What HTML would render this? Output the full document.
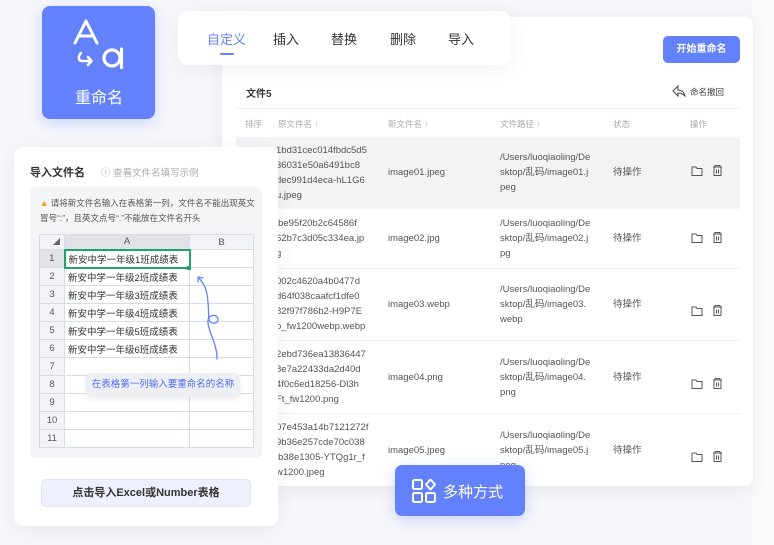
<html><head><style>
*{margin:0;padding:0;box-sizing:border-box}
body{width:774px;height:545px;overflow:hidden;background:#f6f7fa;font-family:"Liberation Sans","Noto Sans CJK SC",sans-serif;position:relative;color:#333}
.abs{position:absolute}
.card{background:#fff;border-radius:10px;box-shadow:0 4px 20px rgba(0,0,30,.06)}
.t{font-size:9.5px;color:#555;line-height:15px}
td{border:1px solid #d6dce8;font-size:9.5px;height:18px;color:#333;padding-left:3px}
td.n{background:#f3f4f7;text-align:center;color:#555;padding:0}
</style></head><body>
<div class="abs" style="left:753px;top:0;width:21px;height:545px;background:#f9fafc"></div>
<div class="abs card" style="left:222px;top:17px;width:531px;height:469px;border-radius:8px"></div>
<div class="abs" style="left:663px;top:36px;width:77px;height:27px;background:#6381fb;border-radius:5px;color:#fff;font-size:10px;font-weight:bold;text-align:center;line-height:27px">开始重命名</div>
<div class="abs" style="left:246px;top:85px;font-size:10px;font-weight:bold;color:#333">文件5</div>
<svg class="abs" style="left:672px;top:85px" width="14" height="12" viewBox="0 0 14 12"><path d="M6 1L1 6l5 5V8c3 0 5 1 7 3-1-4-3-6-7-6V1z" fill="none" stroke="#444" stroke-width="1"/></svg>
<div class="abs" style="left:690px;top:86px;font-size:8.5px;color:#444">命名撤回</div>
<div class="abs" style="left:236px;top:108px;width:504px;border-top:1px solid #eee"></div>
<div class="abs" style="top:118px;left:245px;font-size:8.5px;color:#aaa">排序</div>
<div class="abs" style="top:118px;left:278px;font-size:8.5px;color:#aaa">原文件名 ↑</div>
<div class="abs" style="top:118px;left:388px;font-size:8.5px;color:#aaa">新文件名 ↑</div>
<div class="abs" style="top:118px;left:500px;font-size:8.5px;color:#aaa">文件路径 ↑</div>
<div class="abs" style="top:118px;left:613px;font-size:8.5px;color:#aaa">状态</div>
<div class="abs" style="top:118px;left:690px;font-size:8.5px;color:#aaa">操作</div>
<div class="abs" style="left:236px;top:137px;width:504px;height:72px;background:#f3f3f5"></div>
<div class="abs" style="left:236px;top:268px;width:504px;border-top:1px solid #eee"></div>
<div class="abs" style="left:236px;top:340px;width:504px;border-top:1px solid #eee"></div>
<div class="abs" style="left:236px;top:413px;width:504px;border-top:1px solid #eee"></div>

<div class="abs t" style="left:276px;top:143px">1bd31cec014fbdc5d5<br>36031e50a6491bc8<br>dec991d4eca-hL1G6<br>u.jpeg</div>
<div class="abs t" style="left:388px;top:165px">image01.jpeg</div>
<div class="abs t" style="left:500px;top:150px">/Users/luoqiaoling/De<br>sktop/乱码/image01.j<br>peg</div>
<div class="abs t" style="left:613px;top:165px">待操作</div>

<div class="abs t" style="left:276px;top:216px">lbe95f20b2c64586f<br>62b7c3d05c334ea.jp<br>g</div>
<div class="abs t" style="left:388px;top:231px">image02.jpg</div>
<div class="abs t" style="left:500px;top:216px">/Users/luoqiaoling/De<br>sktop/乱码/image02.j<br>pg</div>
<div class="abs t" style="left:613px;top:231px">待操作</div>

<div class="abs t" style="left:276px;top:274px">002c4620a4b0477d<br>d64f038caafcf1dfe0<br>82f97f786b2-H9P7E<br>o_fw1200webp.webp</div>
<div class="abs t" style="left:388px;top:297px">image03.webp</div>
<div class="abs t" style="left:500px;top:282px">/Users/luoqiaoling/De<br>sktop/乱码/image03.<br>webp</div>
<div class="abs t" style="left:613px;top:297px">待操作</div>

<div class="abs t" style="left:276px;top:347px">2ebd736ea13836447<br>8e7a22433da2d40d<br>4f0c6ed18256-Dl3h<br>Ft_fw1200.png</div>
<div class="abs t" style="left:388px;top:370px">image04.png</div>
<div class="abs t" style="left:500px;top:355px">/Users/luoqiaoling/De<br>sktop/乱码/image04.<br>png</div>
<div class="abs t" style="left:613px;top:370px">待操作</div>

<div class="abs t" style="left:276px;top:420px">07e453a14b7121272f<br>9b36e257cde70c038<br>lb38e1305-YTQg1r_f<br>w1200.jpeg</div>
<div class="abs t" style="left:388px;top:443px">image05.jpeg</div>
<div class="abs t" style="left:500px;top:428px">/Users/luoqiaoling/De<br>sktop/乱码/image05.j<br>peg</div>
<div class="abs t" style="left:613px;top:443px">待操作</div>

<svg class="abs" style="left:690px;top:164px" width="36" height="300">
<defs><g id="ic"><path d="M2 3h4l1 1.5h5v7H2z" fill="none" stroke="#555" stroke-width="1"/><path d="M23 3h9M25 3v-1.5h5V3M24 3.5v8h7v-8M26.5 5.5v4M28.5 5.5v4" fill="none" stroke="#555" stroke-width="1"/></g></defs>
<use href="#ic"/><use href="#ic" y="67"/><use href="#ic" y="140"/><use href="#ic" y="213"/><use href="#ic" y="286"/></svg>

<div class="abs card" style="left:178px;top:11px;width:333px;height:54px;border-radius:10px"></div>
<div class="abs" style="left:207px;top:29px;font-size:13px;color:#6381fb">自定义</div>
<div class="abs" style="left:220px;top:53px;width:14px;height:2px;background:#6381fb;border-radius:1px"></div>
<div class="abs" style="left:273px;top:29px;font-size:13px;color:#333">插入</div>
<div class="abs" style="left:331px;top:29px;font-size:13px;color:#333">替换</div>
<div class="abs" style="left:390px;top:29px;font-size:13px;color:#333">删除</div>
<div class="abs" style="left:448px;top:29px;font-size:13px;color:#333">导入</div>

<div class="abs" style="left:42px;top:6px;width:113px;height:113px;background:#6381fb;border-radius:8px;box-shadow:0 4px 14px rgba(99,129,251,.3)"></div>
<svg class="abs" style="left:70px;top:18px" width="60" height="55" viewBox="0 0 60 55"><path d="M5 25L16 3l11 22M8.5 18h15" fill="none" stroke="#fff" stroke-width="3" stroke-linecap="round" stroke-linejoin="round"/><path d="M11 35c-3 3-3 8 1 8h9M18 39l3.5 4-3.5 4" fill="none" stroke="#fff" stroke-width="2.5" stroke-linecap="round" stroke-linejoin="round"/><circle cx="42" cy="40" r="8" fill="none" stroke="#fff" stroke-width="3.2"/><path d="M51.5 31v18.5" stroke="#fff" stroke-width="3.2" stroke-linecap="round"/></svg>
<div class="abs" style="left:75px;top:84px;font-size:16px;color:#fff">重命名</div>

<div class="abs card" style="left:14px;top:147px;width:264px;height:379px;border-radius:9px"></div>
<div class="abs" style="left:30px;top:164px;font-size:11px;font-weight:bold;color:#333">导入文件名</div>
<div class="abs" style="left:101px;top:165px;font-size:9.5px;color:#aaa">ⓘ 查看文件名填写示例</div>
<div class="abs" style="left:30px;top:187px;width:232px;height:271px;background:#f3f4f6;border-radius:6px"></div>
<div class="abs" style="left:40px;top:196px;font-size:8.5px;color:#555;line-height:15px;width:216px"><span style="color:#e8a400">▲</span> 请将新文件名输入在表格第一列，文件名不能出现英文冒号“:”，且英文点号“.”不能放在文件名开头</div>
<table class="abs" style="left:39px;top:234px;width:215px;border-collapse:collapse;background:#fff">
<tr><td class="n" style="width:25px;height:15px;font-size:7px;text-align:right;padding-right:4px;color:#666">◢</td><td class="n" style="width:125px;height:15px;background:#e0e2e8">A</td><td class="n" style="height:15px">B</td></tr>
<tr><td class="n" style="background:#e0e2e8">1</td><td style="border:2px solid #21a366">新安中学一年级1班成绩表</td><td></td></tr>
<tr><td class="n">2</td><td>新安中学一年级2班成绩表</td><td></td></tr>
<tr><td class="n">3</td><td>新安中学一年级3班成绩表</td><td></td></tr>
<tr><td class="n">4</td><td>新安中学一年级4班成绩表</td><td></td></tr>
<tr><td class="n">5</td><td>新安中学一年级5班成绩表</td><td></td></tr>
<tr><td class="n">6</td><td>新安中学一年级6班成绩表</td><td></td></tr>
<tr><td class="n">7</td><td></td><td></td></tr>
<tr><td class="n">8</td><td></td><td></td></tr>
<tr><td class="n">9</td><td></td><td></td></tr>
<tr><td class="n">10</td><td></td><td></td></tr>
<tr><td class="n">11</td><td></td><td></td></tr>
</table>
<div class="abs" style="left:187px;top:266px;width:4px;height:4px;background:#21a366"></div>
<svg class="abs" style="left:195px;top:272px" width="30" height="90"><path d="M22 87C22 70 12 58 13 48c1-6 10-6 10-0.5 0 5-8 5-9 0C13 38 14 28 11 18 9 12 6 8 3 5M3 5l0 5M3 5l5 1" fill="none" stroke="#6381fb" stroke-width="1.3" stroke-linecap="round"/></svg>
<div class="abs" style="left:86px;top:373px;width:154px;height:24px;background:#eeeff3;border-radius:5px;box-shadow:0 2px 6px rgba(0,0,0,.08);font-size:9.5px;color:#4a6cf7;text-align:center;line-height:24px">在表格第一列输入要重命名的名称</div>
<div class="abs" style="left:41px;top:479px;width:210px;height:28px;background:#eef0fd;border:1px solid #dfe4fb;border-radius:5px;font-size:11px;font-weight:bold;color:#333;text-align:center;line-height:27px">点击导入Excel或Number表格</div>

<div class="abs" style="left:395px;top:465px;width:130px;height:51px;background:#6381fb;border-radius:7px;box-shadow:0 4px 14px rgba(99,129,251,.3)"></div>
<svg class="abs" style="left:412px;top:479px" width="24" height="24" viewBox="0 0 24 24"><rect x="1" y="1" width="9" height="9" rx="1.5" fill="none" stroke="#fff" stroke-width="2"/><rect x="1" y="14" width="9" height="9" rx="1.5" fill="none" stroke="#fff" stroke-width="2"/><rect x="14" y="14" width="9" height="9" rx="1.5" fill="none" stroke="#fff" stroke-width="2"/><path d="M18.5 0.5l4.5 5-4.5 5-4.5-5z" fill="none" stroke="#fff" stroke-width="2" stroke-linejoin="round"/></svg>
<div class="abs" style="left:443px;top:481px;font-size:15px;color:#fff">多种方式</div>
</body></html>
